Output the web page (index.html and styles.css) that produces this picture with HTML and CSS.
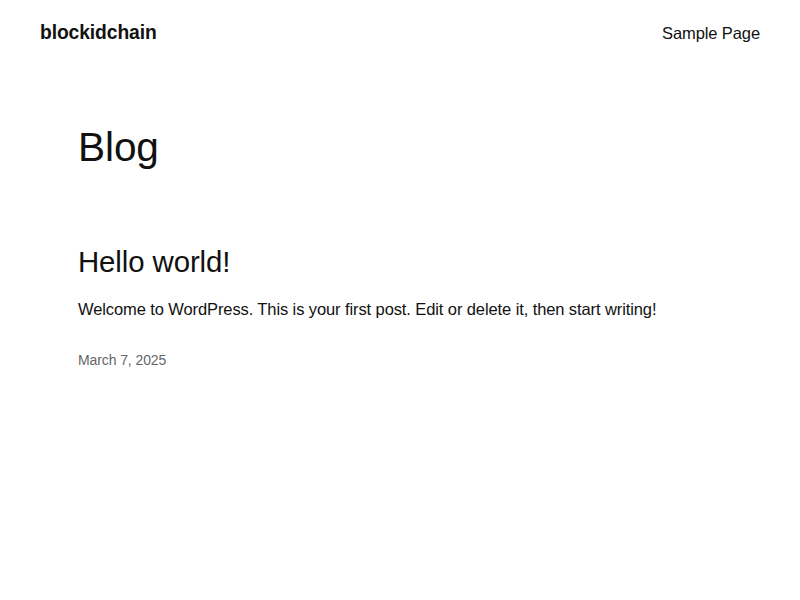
FILE: index.html
```html
<!DOCTYPE html>
<html lang="en">
<head>
  <meta charset="UTF-8" />
  <meta name="viewport" content="width=device-width, initial-scale=1.0"/>
  <title>Blog – blockidchain</title>
  <link rel="stylesheet" href="styles.css">
</head>
<body>
  <header class="site-header">
    <a class="site-title" href="#">blockidchain</a>
    <nav class="site-nav">
      <a href="#">Sample Page</a>
    </nav>
  </header>

  <main class="content">
    <h1 class="page-title">Blog</h1>

    <article class="post">
      <h2 class="post-title"><a href="#">Hello world!</a></h2>
      <p class="post-excerpt">Welcome to WordPress. This is your first post. Edit or delete it, then start writing!</p>
      <time class="post-date">March 7, 2025</time>
    </article>
  </main>
</body>
</html>
```

FILE: styles.css
```css
body {
  margin: 0;
  background: #fff;
  color: #111;
  font-family: "Liberation Sans", Arial, sans-serif;
  font-size: 16.5px;
  line-height: 1.4;
  letter-spacing: -0.1px;
}

a {
  color: inherit;
  text-decoration: none;
}

.site-header {
  display: flex;
  justify-content: space-between;
  align-items: baseline;
  padding: 19px 40px 0;
}

.site-title {
  font-size: 19.3px;
  font-weight: 700;
}

.site-nav a {
  font-size: 16.5px;
}

.content {
  padding: 0 78px;
}

.page-title {
  margin: 79px 0 0;
  font-size: 40.6px;
  font-weight: 400;
  line-height: 1.125;
}

.post {
  margin-top: 73px;
}

.post-title {
  margin: 0;
  font-size: 29.4px;
  font-weight: 400;
  line-height: 1.2;
}

.post-excerpt {
  margin: 19px 0 0;
}

.post-date {
  display: block;
  margin-top: 30px;
  font-size: 14px;
  color: #666;
}
```
